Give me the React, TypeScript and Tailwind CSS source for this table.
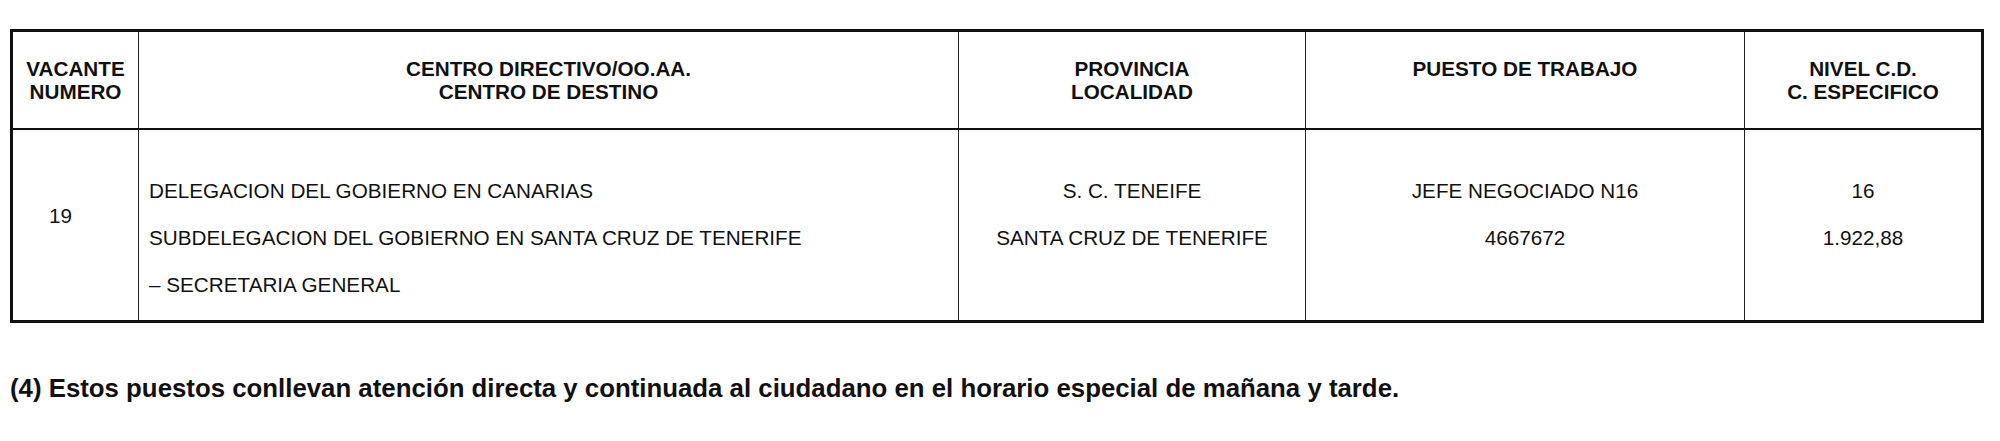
const headers: string[][] = [
  ["VACANTE", "NUMERO"],
  ["CENTRO DIRECTIVO/OO.AA.", "CENTRO DE DESTINO"],
  ["PROVINCIA", "LOCALIDAD"],
  ["PUESTO DE TRABAJO"],
  ["NIVEL C.D.", "C. ESPECIFICO"],
];

export default function App() {
  return (
    <div className="w-[2000px] h-[441px] bg-white text-[#111] font-['Liberation_Sans',Arial,sans-serif]">
      <div className="pt-[29px] pl-[10px]">
        {/* TABLA */}
        <div className="w-[1974px] border-[3px] border-[#111]">
          <div className="grid grid-cols-[126px_820px_347px_439px_236px] border-b-2 border-[#111] h-[98px]">
            {headers.map((lines, i) => (
              <div
                key={i}
                className={`pt-[25px] text-center font-bold text-[20.7px] leading-[23px] ${
                  i < 4 ? "border-r border-[#222]" : ""
                }`}
              >
                {lines.map((l) => (
                  <div key={l}>{l}</div>
                ))}
              </div>
            ))}
          </div>

          <div className="grid grid-cols-[126px_820px_347px_439px_236px] h-[190px] text-[20.7px] leading-[47px]">
            <div className="border-r border-[#222] pl-[36px] pt-[62px]">19</div>
            <div className="border-r border-[#222] pl-[10px] pt-[37px]">
              <div>DELEGACION DEL GOBIERNO EN CANARIAS</div>
              <div>SUBDELEGACION DEL GOBIERNO EN SANTA CRUZ DE TENERIFE</div>
              <div>– SECRETARIA GENERAL</div>
            </div>
            <div className="border-r border-[#222] text-center pt-[37px]">
              <div>S. C. TENEIFE</div>
              <div>SANTA CRUZ DE TENERIFE</div>
            </div>
            <div className="border-r border-[#222] text-center pt-[37px]">
              <div>JEFE NEGOCIADO N16</div>
              <div>4667672</div>
            </div>
            <div className="text-center pt-[37px]">
              <div>16</div>
              <div>1.922,88</div>
            </div>
          </div>
        </div>

        {/* NOTA */}
        <p className="mt-[50px] font-bold text-[25.8px] leading-[30px]">
          (4) Estos puestos conllevan atención directa y continuada al ciudadano en el horario especial de mañana y tarde.
        </p>
      </div>
    </div>
  );
}
